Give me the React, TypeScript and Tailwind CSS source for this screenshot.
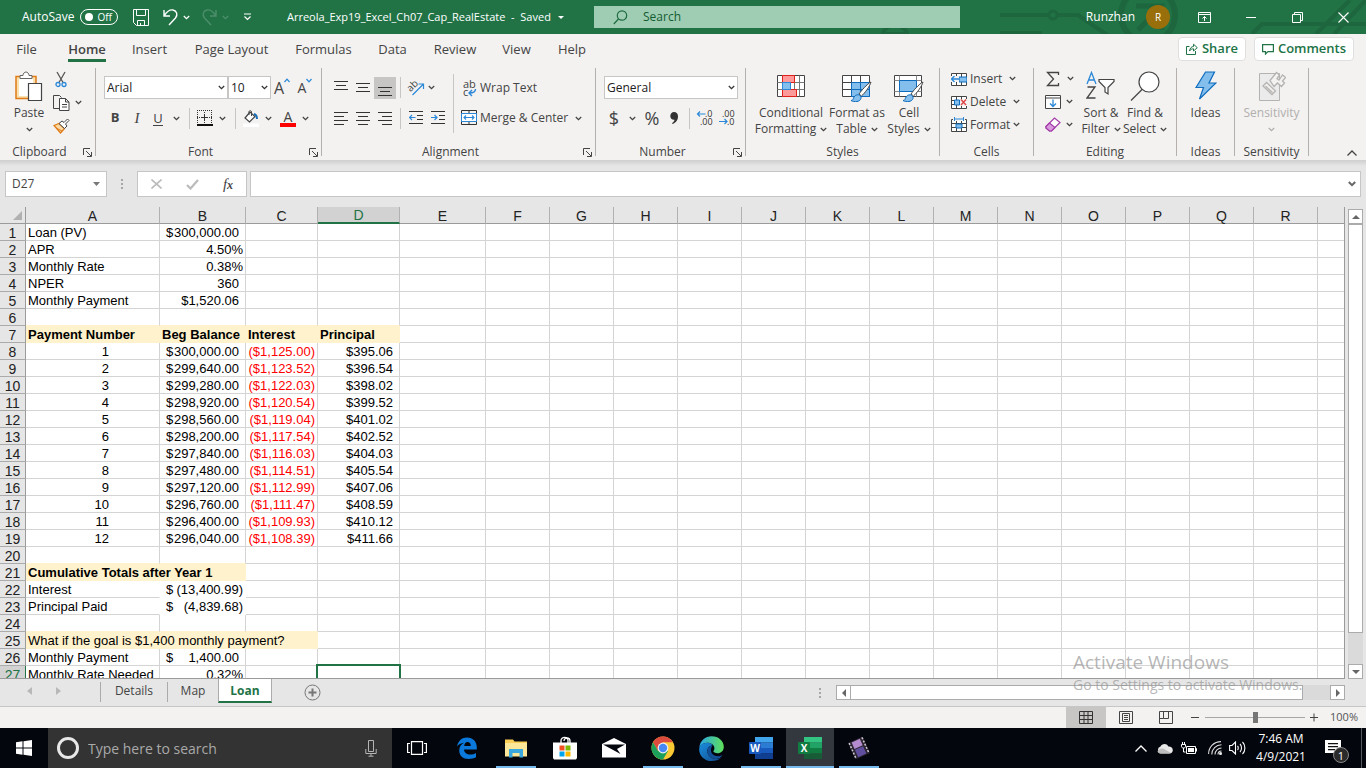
import type { ReactNode } from "react";
import clsx from "clsx";

/* ---------- shared bits ---------- */

function Caret({ className }: { className?: string }) {
    return (
        <span className={clsx("flex shrink-0 items-center justify-center", className)}>
            <svg width="7" height="5" viewBox="0 0 7 5" fill="none" stroke="currentColor" strokeWidth="1.3">
                <path d="M.8 1l2.7 2.6L6.2 1" />
            </svg>
        </span>
    );
}

function Divider({ className }: { className?: string }) {
    return <span className={clsx("w-px shrink-0 bg-[#c8c6c4]", className)} />;
}

function Group({ label, width, launcher, children }: { label: string; width: string; launcher?: boolean; children: ReactNode }) {
    return (
        <section aria-label={label} className={clsx("flex shrink-0", width)}>
            <div className="flex min-w-0 flex-1 flex-col">
                <div className="flex flex-1 items-start">{children}</div>
                <div className="flex h-4 items-center">
                    <span className="flex-1 text-center leading-4">{label}</span>
                    {launcher && (
                        <button aria-label={`${label} settings`} className="w-4 pl-1">
                            <svg width="9" height="9" viewBox="0 0 9 9" fill="none" stroke="#444">
                                <path d="M.5 7V.5H7M3 3l5 5M8.5 4v4.500H4" />
                            </svg>
                        </button>
                    )}
                </div>
            </div>
            <div className="my-1 w-px bg-[#b3b0ad]" />
        </section>
    );
}

function BigButton({ icon, lines, caret, width, disabled }: { icon: ReactNode; lines: string[]; caret?: boolean; width: string; disabled?: boolean }) {
    return (
        <button disabled={disabled} className={clsx("flex shrink-0 flex-col items-center whitespace-nowrap pt-[7px] leading-4", width, disabled && "text-[#b1afad]")}>
            <span className="flex h-[34px] items-start justify-center">{icon}</span>
            {lines.map((line, i) => (
                <span key={line} className="flex h-4 items-center gap-1">
                    {line}
                    {caret && i === lines.length - 1 && lines.length > 1 && <Caret />}
                </span>
            ))}
            {caret && lines.length === 1 && <Caret className="h-4" />}
        </button>
    );
}

function IconButton({ label, width, active, children }: { label: string; width?: string; active?: boolean; children: ReactNode }) {
    return (
        <button aria-label={label} className={clsx("flex h-[22px] shrink-0 items-center justify-center", width ?? "w-[22px]", active && "bg-[#c8c6c4]")}>
            {children}
        </button>
    );
}

function Select({ label, value, width }: { label: string; value: string; width: string }) {
    return (
        <div className={clsx("relative flex h-[23px] shrink-0 items-center border border-[#c8c6c4] bg-white", width)}>
            <select aria-label={label} className="h-full w-full appearance-none bg-transparent pl-[2px] text-[12px] text-[#222] outline-none">
                <option>{value}</option>
            </select>
            <Caret className="pointer-events-none absolute right-[2px] text-[#333]" />
        </div>
    );
}

/* ---------- title bar ---------- */

function TitleBar() {
    return (
        <header className="relative flex h-[34px] shrink-0 items-center overflow-hidden bg-[#217346] text-[12px] text-white">
            <svg className="absolute right-0 top-0" width="500" height="34" viewBox="0 0 500 34" fill="none" stroke="#1d663e" strokeWidth="4">
                <circle cx="29" cy="38" r="13" />
                <path d="M18 34h24" />
                <path d="M134 15h48M190 15h22l32 22M134 33h42" />
                <circle cx="187" cy="15" r="4" strokeWidth="3" />
                <circle cx="282" cy="15" r="27" strokeWidth="6" />
                <path d="M270 6h26v24M296 6l-24 24" strokeWidth="5" />
                <path d="M386 34l10-10h104M450 34l34-34M468 34l32-34" />
            </svg>
            <div className="relative flex w-[594px] shrink-0 items-center">
                <label className="flex w-[131px] items-center pl-[22px]">
                    <span className="w-[58px]">AutoSave</span>
                    <input type="checkbox" role="switch" className="peer sr-only" />
                    <span className="flex h-4 w-[38px] items-center justify-between rounded-full border border-white pl-1 pr-[5px] text-[10px] leading-none">
                        <span className="h-2 w-2 rounded-full bg-white" />
                        Off
                    </span>
                </label>
                <button aria-label="Save" className="w-8 pl-[2px]">
                    <svg width="16" height="17" viewBox="0 0 16 17" fill="none" stroke="#fff">
                        <path d="M.5.5h15v16h-12l-3-3zM3.500.5v6h9v-6M4.500 16.500v-5h7v5M7.500 14v2" />
                    </svg>
                </button>
                <button aria-label="Undo" className="w-[17px]">
                    <svg width="16" height="18" viewBox="0 0 16 18" fill="none" stroke="#fff" strokeWidth="1.400">
                        <path d="M1 2v6h6M1.300 7.500C4 3.500 7 1.500 10 2c4 .8 5 5 2.500 8L6 17" />
                    </svg>
                </button>
                <Caret className="w-[13px]" />
                <button aria-label="Redo" className="ml-[8px] w-[17px] text-[#4d8f6b]">
                    <svg width="16" height="18" viewBox="0 0 16 18" fill="none" stroke="currentColor" strokeWidth="1.400">
                        <path d="M15 2v6H9M14.700 7.500C12 3.500 9 1.500 6 2 2 2.800 1 7 3.500 10l6.500 7" />
                    </svg>
                </button>
                <Caret className="w-[14px] text-[#4d8f6b]" />
                <button aria-label="Customize Quick Access Toolbar" className="ml-[11px] w-[44px]">
                    <svg width="9" height="8" viewBox="0 0 9 8" fill="none" stroke="#fff" strokeWidth="1.200">
                        <path d="M1 1h7M1.500 3.500l3 3 3-3" />
                    </svg>
                </button>
                <button className="flex items-center gap-[7px] whitespace-nowrap text-[11px]">
                    Arreola_Exp19_Excel_Ch07_Cap_RealEstate &nbsp;-&nbsp; Saved
                    <svg width="6" height="3" viewBox="0 0 6 3" fill="#fff"><path d="M0 0h6L3 3z" /></svg>
                </button>
            </div>
            <label className="relative flex h-[22px] w-[366px] shrink-0 items-center gap-[15px] bg-[#9fcdb3] pl-[19px]">
                <svg width="15" height="15" viewBox="0 0 15 15" fill="none" stroke="#1d6b40" strokeWidth="1.200" className="shrink-0">
                    <circle cx="9" cy="5.500" r="4.700" />
                    <path d="M5.500 9L.8 14" />
                </svg>
                <input aria-label="Search" placeholder="Search" className="w-full bg-transparent outline-none placeholder:text-[#135c32]" />
            </label>
            <div className="relative flex flex-1 items-center justify-end">
                <span>Runzhan</span>
                <span className="ml-[11px] mr-[10px] flex h-6 w-6 items-center justify-center rounded-full bg-[#986f0b] text-[10px]">R</span>
                <button aria-label="Ribbon display options" className="flex w-12 justify-center">
                    <svg width="13" height="11" viewBox="0 0 13 11" fill="none" stroke="#fff">
                        <path d="M.5.5h12v10H.5zM.5 2.500h12M6.500 9V4.500M4.500 6.500l2-2 2 2" />
                    </svg>
                </button>
                <button aria-label="Minimize" className="flex w-[46px] justify-center"><span className="h-px w-[10px] bg-white" /></button>
                <button aria-label="Restore" className="flex w-[46px] justify-center">
                    <svg width="11" height="11" viewBox="0 0 11 11" fill="none" stroke="#fff">
                        <path d="M.5 2.500h8v8h-8zM2.500 2.500v-2h8v8h-2" />
                    </svg>
                </button>
                <button aria-label="Close" className="flex w-[46px] justify-center">
                    <svg width="11" height="11" viewBox="0 0 11 11" stroke="#fff" strokeWidth="1.100">
                        <path d="M.5.5l10 10M10.500.5l-10 10" />
                    </svg>
                </button>
            </div>
        </header>
    );
}

/* ---------- ribbon tabs ---------- */

const TABS = [
    { name: "File", width: "w-[53px]" },
    { name: "Home", width: "w-[68px]" },
    { name: "Insert", width: "w-[57px]" },
    { name: "Page Layout", width: "w-[107px]" },
    { name: "Formulas", width: "w-[77px]" },
    { name: "Data", width: "w-[61px]" },
    { name: "Review", width: "w-[64px]" },
    { name: "View", width: "w-[59px]" },
    { name: "Help", width: "w-[52px]" },
];

function RibbonTabs() {
    return (
        <nav className="flex h-[30px] shrink-0 items-center bg-[#f3f2f1] text-[13px] text-[#444]">
            {TABS.map((tab) => (
                <button key={tab.name} className={clsx("flex h-full justify-center whitespace-nowrap", tab.width)}>
                    <span className={clsx("mb-[2px] mt-[5px] border-b-[3px] leading-5", tab.name === "Home" ? "border-[#217346] font-semibold" : "border-transparent")}>
                        {tab.name}
                    </span>
                </button>
            ))}
            <div className="flex flex-1 justify-end gap-2 pr-3 font-semibold text-[#217346]">
                <button className="flex h-6 w-[68px] items-center justify-center gap-1 rounded-sm border border-[#e1dfdd] bg-white">
                    <svg width="12" height="12" viewBox="0 0 12 12" fill="none" stroke="#217346">
                        <path d="M3.500 3.500h-3v8h9V8M3.500 8c.5-3 2-4.500 4-4.500V1.200L11.300 4.700 7.500 8V5.800C5.500 5.800 4.500 6.500 3.500 8z" />
                    </svg>
                    Share
                </button>
                <button className="flex h-6 w-[100px] items-center justify-center gap-1 rounded-sm border border-[#e1dfdd] bg-white">
                    <svg width="12" height="11" viewBox="0 0 12 11" fill="none" stroke="#217346" strokeWidth="1.200">
                        <path d="M.6.6h10.800v7H6L3.500 10V7.600H.6z" />
                    </svg>
                    Comments
                </button>
            </div>
        </nav>
    );
}

/* ---------- ribbon icons ---------- */

function Lines({ rows }: { rows: number[][] }) {
    return (
        <svg width="14" height="16" viewBox="0 0 14 16" fill="#333">
            {rows.map(([x, y, w]) => <rect key={y} x={x} y={y} width={w} height="1" />)}
        </svg>
    );
}

function PasteIcon() {
    return (
        <svg width="28" height="31" viewBox="0 0 28 31" fill="none">
            <path d="M1 5.500h20v22H1z" fill="#fbe0b0" stroke="#e07b16" strokeWidth="1.500" />
            <path d="M4 8h14v17H4z" fill="#fff" />
            <path d="M5 7.500V4.500h3C8 2.500 9.500 1 11 1s3 1.500 3 3.500h3v3z" fill="#fff" stroke="#666" />
            <path d="M13.500 12.500h13v17h-13z" fill="#fff" stroke="#444" strokeWidth="1.200" />
        </svg>
    );
}

function ScissorsIcon() {
    return (
        <svg width="12" height="17" viewBox="0 0 12 17" fill="none">
            <path d="M2 1l6 10.500M10 1L4 11.500" stroke="#555" strokeWidth="1.300" />
            <circle cx="3" cy="13.500" r="2" stroke="#2b88d8" strokeWidth="1.300" />
            <circle cx="9" cy="13.500" r="2" stroke="#2b88d8" strokeWidth="1.300" />
        </svg>
    );
}

function CopyIcon() {
    return (
        <svg width="17" height="17" viewBox="0 0 17 17" fill="none" stroke="#444">
            <path d="M6.500 14.500h-6v-13h6l2 2" />
            <path d="M6.500 4.500h6l3.500 3.500v8.500H6.500zM12.500 4.500V8H16M9 10.500h5M9 13h5" fill="#fff" />
        </svg>
    );
}

function PainterIcon() {
    return (
        <svg width="17" height="16" viewBox="0 0 17 16" fill="none">
            <path d="M1 7.500l5-2 5.500 5L7.500 15z" fill="#fbd9a5" stroke="#e07b16" strokeWidth="1.300" />
            <path d="M3 10l6 3" stroke="#e07b16" />
            <path d="M6 5.500L9 3l2 1.500L14.500 1 16 2.500 12.500 6l1.500 2-2.500 2.500z" fill="#fff" stroke="#444" />
        </svg>
    );
}

function BordersIcon() {
    return (
        <svg width="16" height="16" viewBox="0 0 16 16" fill="none" stroke="#333">
            <path d="M0 .5h16M0 7.500h16" strokeDasharray="1 1" />
            <path d="M.5 2v12M7.500 2v12M14.500 2v12" strokeDasharray="1 1" />
            <path d="M5 7.500h5M7.500 5v5" />
            <path d="M0 15h16" strokeWidth="2" stroke="#111" />
        </svg>
    );
}

function FillIcon() {
    return (
        <svg width="16" height="17" viewBox="0 0 16 17" fill="none">
            <path d="M7 2L2 8l4.500 4L12 6.500z" fill="#fff" stroke="#444" strokeWidth="1.200" />
            <path d="M6 5V1.500C6 .5 8.500.5 8.500 1.500V6" stroke="#444" />
            <path d="M11 4c2 .5 3 2 3 5" stroke="#1d6fb8" strokeWidth="2" />
            <path d="M0 13.500h16V17H0z" fill="#fff" />
        </svg>
    );
}

function OrientIcon() {
    return (
        <svg width="18" height="17" viewBox="0 0 18 17" className="overflow-visible">
            <text x="1" y="11" fontSize="10" fill="#444" transform="rotate(-45 5 9)">ab</text>
            <path d="M5.500 16L16 5.500M11.500 5H16.500V10" fill="none" stroke="#2b88d8" strokeWidth="1.200" />
        </svg>
    );
}

function WrapIcon() {
    return (
        <svg width="16" height="18" viewBox="0 0 16 18" className="overflow-visible">
            <text fontSize="11" fill="#444">
                <tspan x="2" y="9">ab</tspan>
                <tspan x="2" y="17">c</tspan>
            </text>
            <path d="M14.500 10c0 3-2 4-6 4M11 11l-3 3 3 3" fill="none" stroke="#2b88d8" strokeWidth="1.400" />
        </svg>
    );
}

function IndentIcon({ flip }: { flip?: boolean }) {
    return (
        <svg width="14" height="14" viewBox="0 0 14 14" fill="none">
            <path d="M0 .5h14M8 4.500h6M8 8.500h6M0 12.500h14" stroke="#333" />
            <path d={flip ? "M0 6.500h6M3.500 4l2.500 2.500L3.500 9" : "M.5 6.500h6M3 4L.5 6.500 3 9"} stroke="#2b88d8" strokeWidth="1.200" />
        </svg>
    );
}

function MergeIcon() {
    return (
        <svg width="16" height="16" viewBox="0 0 16 16" fill="none">
            <path d="M.5.5h15v14H.5zM8 .5v3M8 12v3" stroke="#333" />
            <path d="M.5 3.500h15v8H.5z" fill="#fff" stroke="#2b88d8" />
            <path d="M3 7.500h10M5 5.500l-2 2 2 2M11 5.500l2 2-2 2" stroke="#2b88d8" strokeWidth="1.100" />
        </svg>
    );
}

function DecimalIcon({ decrease }: { decrease?: boolean }) {
    return (
        <svg width="17" height="18" viewBox="0 0 17 18" className="overflow-visible">
            <text fontSize="9" fill="#333">
                <tspan x={decrease ? 3 : 8} y="8">{decrease ? ".00" : ".0"}</tspan>
                <tspan x={decrease ? 8 : 3} y="16">{decrease ? ".0" : ".00"}</tspan>
            </text>
            <path d={decrease ? "M0 12.500h8M5.500 10L8 12.500 5.500 15" : "M.5 5h8M3 2.500L.5 5 3 7.500"} fill="none" stroke="#2b88d8" strokeWidth="1.200" />
        </svg>
    );
}

function ConditionalIcon() {
    return (
        <svg width="28" height="24" viewBox="0 0 28 24" fill="none">
            <path d="M.5 1.500h27v21H.5z" fill="#fff" stroke="#444" />
            <path d="M5.500 1.500v21M22.500 1.500v21M.5 8.500h27M.5 15.500h27M17.500 8.500v7" stroke="#777" />
            <path d="M5.500 1.500h12v7h-12zM5.500 15.500h14v7h-14z" fill="#ff9a9a" stroke="#e0201b" />
            <path d="M5.500 8.500h8v7h-8z" fill="#83beec" stroke="#2b88d8" />
        </svg>
    );
}

function StyleIcon({ table }: { table?: boolean }) {
    return (
        <svg width="30" height="28" viewBox="0 0 30 28" fill="none">
            <path d="M.5 1.500h27v21H.5z" fill="#fff" stroke="#444" />
            {table ? (
                <>
                    <path d="M9.500 8.500h18v14h-18z" fill="#83beec" />
                    <path d="M.5 8.500h27M.5 15.500h9M9.500 1.500v21M18.500 1.500v7" stroke="#444" />
                    <path d="M9.500 15.500h18M18.500 8.500v14M9.500 8.500h18v14h-18z" stroke="#0f6cbd" />
                </>
            ) : (
                <>
                    <path d="M.5 6.500h27M.5 17.500h27M5.500 1.500v21M22.500 1.500v21" stroke="#888" />
                    <path d="M5.500 6.500h17v11h-17z" fill="#83beec" stroke="#0f6cbd" />
                </>
            )}
            <path d="M29 8c-4 2-10 9-12 12l2.500 2C23 19 28 12 29 8z" fill="#fff" stroke="#444" />
            <path d="M9 26.500c2 0 2-1.500 3-3.500 1.500-2.500 5-3 6.500-1s0 5-3.500 5.500c-2 .3-4.500 0-6-1z" fill="#83beec" stroke="#0f6cbd" />
        </svg>
    );
}

function CellsIcon({ kind }: { kind: string }) {
    return (
        <svg width="16" height="16" viewBox="0 0 16 16" fill="none">
            <path d="M.5 2.500h15v12H.5zM.5 6.500h15M.5 10.500h15M5.500 2.500v12M10.500 2.500v12" fill="#fff" stroke="#444" />
            {kind === "Insert" && (
                <>
                    <path d="M8 6h8v5H8z" fill="#83beec" stroke="#0f6cbd" />
                    <path d="M0 5h8v6H0z" fill="#f3f2f1" />
                    <path d="M.5 8h8M3.500 5l-3 3 3 3" stroke="#2b88d8" strokeWidth="1.300" />
                </>
            )}
            {kind === "Delete" && (
                <>
                    <path d="M3.500 6h5v5h-5z" fill="#83beec" stroke="#0f6cbd" />
                    <path d="M9 5h7v7H9z" fill="#f3f2f1" />
                    <path d="M10 5.500l5 5.500M15 5.500L10 11" stroke="#e04343" strokeWidth="1.400" />
                </>
            )}
            {kind === "Format" && (
                <>
                    <path d="M2 0h12v4H2z" fill="#f3f2f1" />
                    <path d="M5 7h6v4H5z" fill="#83beec" stroke="#0f6cbd" />
                    <path d="M3.500 0v4M12.500 0v4M3.500 2h9" stroke="#2b88d8" />
                </>
            )}
        </svg>
    );
}

function SigmaIcon() {
    return (
        <svg width="16" height="16" viewBox="0 0 16 16" fill="none" stroke="#444" strokeWidth="1.300">
            <path d="M13.500 4V1.500H2.500L8.500 8l-6 6.500h11V12" />
        </svg>
    );
}

function FillDownIcon() {
    return (
        <svg width="16" height="14" viewBox="0 0 16 14" fill="none">
            <path d="M.5.500h15v13H.5zM.5 3h15" fill="#fff" stroke="#444" />
            <path d="M8 4.500v7M5 8.500l3 3 3-3" stroke="#2b88d8" strokeWidth="1.300" />
        </svg>
    );
}

function EraserIcon() {
    return (
        <svg width="16" height="15" viewBox="0 0 16 15" stroke="#a33aa8" strokeWidth="1.200">
            <path d="M1 9.500L9.500 1 15 5.500 6.500 14H4.500L1 11z" fill="#fff" />
            <path d="M1 9.500l3.500-3.500L10 10.500 6.500 14H4.500L1 11z" fill="#d99ade" />
        </svg>
    );
}

function SortIcon() {
    return (
        <svg width="30" height="30" viewBox="0 0 30 30" fill="none">
            <path d="M1 13L5.500 1.500 10 13M2.500 9h6" stroke="#2b88d8" strokeWidth="1.300" />
            <path d="M1.500 16h7.500l-8 11h8.500" stroke="#444" strokeWidth="1.300" />
            <path d="M13 8.500h15v2l-6 6V23l-3-2v-4.500l-6-6z" fill="#fff" stroke="#444" strokeWidth="1.200" />
        </svg>
    );
}

function FindIcon() {
    return (
        <svg width="30" height="31" viewBox="0 0 30 31" stroke="#444" strokeWidth="1.200">
            <circle cx="19" cy="11" r="10" fill="#fff" />
            <path d="M12 18.500L1 29.500" />
        </svg>
    );
}

function IdeasIcon() {
    return (
        <svg width="22" height="29" viewBox="0 0 22 29">
            <path d="M10.500 1h9L14 12h7L4.500 28l4-11.500H1z" fill="#83beec" stroke="#0f6cbd" strokeWidth="1.200" />
        </svg>
    );
}

function SensitivityIcon() {
    return (
        <svg width="28" height="31" viewBox="0 0 28 31" fill="#f3f2f1" stroke="#b5b3b1">
            <path d="M1.500 2.500h20v27h-20z" fill="#ebebeb" />
            <path d="M5 15l3.500-3.500 9 8.500-3.500 3.500zM7.500 15l7 6.500" strokeWidth="1.300" />
            <path d="M12 9.500L18.500 1.500l3 2.500L19 7.500l2 1.500 3.500-5 3 2.500-3 3.500 2 2-3 3.500-4-3.500-3.500 3.500z" strokeWidth="1.300" />
        </svg>
    );
}

/* ---------- ribbon ---------- */

function Ribbon() {
    return (
        <div className="flex h-24 shrink-0 bg-[#f3f2f1] text-[12px] text-[#444]">
            <Group label="Clipboard" width="w-[96px]" launcher>
                <BigButton icon={<PasteIcon />} lines={["Paste"]} caret width="w-[50px] pl-2" />
                <div className="pl-[3px] pt-1">
                    <button aria-label="Cut" className="flex h-[23px] w-4 items-center justify-center"><ScissorsIcon /></button>
                    <button aria-label="Copy" className="flex h-[23px] items-center"><CopyIcon /><Caret className="w-4" /></button>
                    <button aria-label="Format Painter" className="flex h-[23px] items-center"><PainterIcon /></button>
                </div>
            </Group>

            <Group label="Font" width="w-[226px]" launcher>
                <div className="pl-2 pt-3">
                    <div className="flex items-center">
                        <Select label="Font" value="Arial" width="w-[124px]" />
                        <Select label="Font size" value="10" width="w-[43px]" />
                        <button aria-label="Increase font size" className="flex w-[22px] items-start justify-center text-[16px] leading-5">
                            A<svg width="6" height="5" viewBox="0 0 6 5" fill="none" stroke="#2b88d8" strokeWidth="1.200"><path d="M.5 4L3 1.200 5.500 4" /></svg>
                        </button>
                        <button aria-label="Decrease font size" className="flex w-6 items-start justify-center text-[14px] leading-5">
                            A<svg width="6" height="5" viewBox="0 0 6 5" fill="none" stroke="#2b88d8" strokeWidth="1.200"><path d="M.5 1L3 3.800 5.500 1" /></svg>
                        </button>
                    </div>
                    <div className="flex h-[38px] items-center">
                        <IconButton label="Bold"><b className="text-[13px]">B</b></IconButton>
                        <IconButton label="Italic"><i className="font-['Liberation_Serif',serif] text-[15px]">I</i></IconButton>
                        <IconButton label="Underline" width="w-5"><span className="border-b border-[#444] text-[13px] leading-[14px]">U</span></IconButton>
                        <Caret className="w-4" />
                        <Divider className="ml-[5px] mr-[7px] h-[21px]" />
                        <IconButton label="Borders" width="w-4"><BordersIcon /></IconButton>
                        <Caret className="w-[18px]" />
                        <Divider className="ml-1 mr-[7px] h-[21px]" />
                        <IconButton label="Fill color" width="w-4"><FillIcon /></IconButton>
                        <Caret className="w-[18px]" />
                        <IconButton label="Font color" width="w-[22px]">
                            <span className="w-4 border-b-4 border-[#f00] text-center text-[14px] leading-[13px]">A</span>
                        </IconButton>
                        <Caret className="w-[12px]" />
                    </div>
                </div>
            </Group>

            <Group label="Alignment" width="w-[274px]" launcher>
                <div className="w-[131px] pl-2 pt-3">
                    <div className="flex h-[23px] items-center">
                        <IconButton label="Top align"><Lines rows={[[0, 1, 14], [2, 5, 10], [0, 9, 14]]} /></IconButton>
                        <IconButton label="Middle align"><Lines rows={[[0, 3, 14], [2, 7, 10], [0, 11, 14]]} /></IconButton>
                        <IconButton label="Bottom align" active><Lines rows={[[0, 7, 14], [2, 11, 10], [0, 15, 14]]} /></IconButton>
                        <Divider className="mx-1 h-[21px]" />
                        <IconButton label="Orientation"><OrientIcon /></IconButton>
                        <Caret className="w-2" />
                    </div>
                    <div className="flex h-[38px] items-center">
                        <IconButton label="Align left"><Lines rows={[[0, 2, 14], [0, 6, 10], [0, 10, 14], [0, 14, 10]]} /></IconButton>
                        <IconButton label="Center"><Lines rows={[[0, 2, 14], [2, 6, 10], [0, 10, 14], [2, 14, 10]]} /></IconButton>
                        <IconButton label="Align right"><Lines rows={[[0, 2, 14], [4, 6, 10], [0, 10, 14], [4, 14, 10]]} /></IconButton>
                        <Divider className="mx-1 h-[21px]" />
                        <IconButton label="Decrease indent"><IndentIcon /></IconButton>
                        <IconButton label="Increase indent"><IndentIcon flip /></IconButton>
                    </div>
                </div>
                <Divider className="mt-[10px] h-[59px]" />
                <div className="pl-[7px] pt-3">
                    <button className="flex h-[23px] items-center gap-[3px]"><WrapIcon />Wrap Text</button>
                    <button className="flex h-[38px] items-center gap-[3px] whitespace-nowrap"><MergeIcon />Merge &amp; Center<Caret className="w-[14px]" /></button>
                </div>
            </Group>

            <Group label="Number" width="w-[150px]" launcher>
                <div className="pl-2 pt-3">
                    <Select label="Number format" value="General" width="w-[134px]" />
                    <div className="flex h-[38px] items-center">
                        <IconButton label="Accounting format" width="w-5"><span className="text-[18px]">$</span></IconButton>
                        <Caret className="w-4" />
                        <IconButton label="Percent style" width="w-6"><span className="text-[18px]">%</span></IconButton>
                        <IconButton label="Comma style" width="w-5">
                            <svg width="8" height="12" viewBox="0 0 8 12" fill="#333"><path d="M4 0c2.500 0 4 1.700 4 4.300C8 8 6 11 2.500 12L2 11c1.500-.8 2.300-1.900 2.500-3.300C2 8 .3 6.300.3 4.200.3 1.800 1.800 0 4 0z" /></svg>
                        </IconButton>
                        <Divider className="ml-[5px] mr-[7px] h-[21px]" />
                        <IconButton label="Increase decimal" width="w-4"><DecimalIcon /></IconButton>
                        <IconButton label="Decrease decimal" width="w-7"><DecimalIcon decrease /></IconButton>
                    </div>
                </div>
            </Group>

            <Group label="Styles" width="w-[194px]">
                <div className="flex pl-[6px]">
                    <BigButton icon={<ConditionalIcon />} lines={["Conditional", "Formatting"]} caret width="w-[78px] [&>span:first-child]:pt-[3px]" />
                    <BigButton icon={<StyleIcon table />} lines={["Format as", "Table"]} caret width="w-[54px] [&>span:first-child]:pt-[3px]" />
                    <BigButton icon={<StyleIcon />} lines={["Cell", "Styles"]} caret width="w-[50px] [&>span:first-child]:pt-[3px]" />
                </div>
            </Group>

            <Group label="Cells" width="w-[94px]">
                <div className="pl-[11px] pt-[3px]">
                    {["Insert", "Delete", "Format"].map((name) => (
                        <button key={name} className="flex h-[23px] items-center gap-[3px]">
                            <CellsIcon kind={name} />
                            {name}
                            <Caret className={name === "Format" ? "w-[7px]" : "w-[14px]"} />
                        </button>
                    ))}
                </div>
            </Group>

            <Group label="Editing" width="w-[143px]">
                <div className="pl-[11px] pt-[3px]">
                    <button aria-label="AutoSum" className="flex h-[23px] items-center"><SigmaIcon /><Caret className="w-[18px]" /></button>
                    <button aria-label="Fill" className="flex h-[23px] items-center"><FillDownIcon /><Caret className="w-[16px]" /></button>
                    <button aria-label="Clear" className="flex h-[23px] items-center"><EraserIcon /><Caret className="w-[16px]" /></button>
                </div>
                <BigButton icon={<SortIcon />} lines={["Sort &", "Filter"]} caret width="w-[44px]" />
                <BigButton icon={<FindIcon />} lines={["Find &", "Select"]} caret width="w-[44px]" />
            </Group>

            <Group label="Ideas" width="w-[58px]">
                <BigButton icon={<IdeasIcon />} lines={["Ideas"]} width="w-full" />
            </Group>

            <Group label="Sensitivity" width="w-[74px]">
                <BigButton icon={<SensitivityIcon />} lines={["Sensitivity"]} caret width="w-full" disabled />
            </Group>

            <div className="flex flex-1 items-end justify-end pb-1 pr-[9px]">
                <button aria-label="Collapse ribbon">
                    <svg width="10" height="6" viewBox="0 0 10 6" fill="none" stroke="#444" strokeWidth="1.300"><path d="M.5 5.500L5 1l4.500 4.500" /></svg>
                </button>
            </div>
        </div>
    );
}

function Dots() {
    return (
        <svg width="2" height="10" viewBox="0 0 2 10" fill="#a6a6a6">
            <path d="M0 0h2v2H0zM0 4h2v2H0zM0 8h2v2H0z" />
        </svg>
    );
}

function FormulaBar() {
    return (
        <div className="flex h-[47px] shrink-0 items-start bg-[linear-gradient(#cfcfcf,#e6e6e6_6px)] pl-[5px] pr-[5px] pt-[11px]">
            <div className="flex h-[26px] w-[102px] shrink-0 items-center border border-[#c6c6c6] bg-white pr-[6px]">
                <input aria-label="Name box" defaultValue="D27" className="w-full min-w-0 pl-[6px] text-[12px] text-[#444] outline-none" />
                <svg width="7" height="4" viewBox="0 0 7 4" fill="#777" className="shrink-0"><path d="M0 0h7L3.500 4z" /></svg>
            </div>
            <span className="flex h-[26px] w-[30px] shrink-0 items-center justify-center"><Dots /></span>
            <div className="flex h-[26px] w-[110px] shrink-0 items-center border border-[#c6c6c6] bg-white">
                <button aria-label="Cancel" className="flex w-9 justify-center">
                    <svg width="11" height="10" viewBox="0 0 11 10" stroke="#bbb" strokeWidth="1.600"><path d="M.5.5l10 9M10.500.5l-10 9" /></svg>
                </button>
                <button aria-label="Enter" className="flex w-9 justify-center">
                    <svg width="13" height="11" viewBox="0 0 13 11" fill="none" stroke="#bbb" strokeWidth="2.200"><path d="M1 6l3.500 3.500L12 1" /></svg>
                </button>
                <button aria-label="Insert function" className="w-9 font-['Liberation_Serif',serif] text-[15px] italic leading-5 text-[#444]">
                    f<span className="text-[12px] font-bold">x</span>
                </button>
            </div>
            <div className="ml-[3px] flex h-[26px] min-w-0 flex-1 items-center border border-[#c6c6c6] bg-white pr-[4px]">
                <input aria-label="Formula bar" className="w-full min-w-0 px-1 text-[12px] outline-none" />
                <svg width="8" height="6" viewBox="0 0 8 6" fill="none" stroke="#666" strokeWidth="2" className="shrink-0"><path d="M.8 1L4 4.200 7.200 1" /></svg>
            </div>
        </div>
    );
}

/* ---------- worksheet ---------- */

type Cell = { text?: string; symbol?: string; className?: string; span?: number };

const COLUMNS = ["A", "B", "C", "D", "E", "F", "G", "H", "I", "J", "K", "L", "M", "N", "O", "P", "Q", "R", ""];
const COLUMN_WIDTHS = ["w-[134px]", "w-[86px]", "w-[72px]", "w-[82px]", "w-[86px]"];

const FILLED = "border-[#fff2cc] bg-[#fff2cc] pl-[2px]";
const LABEL = "border-[#d4d4d4] pl-[2px]";
const NUMBER = "border-[#d4d4d4] pr-[6px] text-right";
const PERCENT = "border-[#d4d4d4] pr-[2px] text-right";
const ABOVE_FILL = "border-r-[#d4d4d4] border-b-[#fff2cc]";

const label = (text: string): Cell => ({ text, className: LABEL });
const money = (text: string): Cell => ({ symbol: "$", text, className: "border-[#d4d4d4] pl-[6px] pr-[6px]" });

const PAYMENTS = [
    ["300,000.00", "1,125.00", "395.06"],
    ["299,640.00", "1,123.52", "396.54"],
    ["299,280.00", "1,122.03", "398.02"],
    ["298,920.00", "1,120.54", "399.52"],
    ["298,560.00", "1,119.04", "401.02"],
    ["298,200.00", "1,117.54", "402.52"],
    ["297,840.00", "1,116.03", "404.03"],
    ["297,480.00", "1,114.51", "405.54"],
    ["297,120.00", "1,112.99", "407.06"],
    ["296,760.00", "1,111.47", "408.59"],
    ["296,400.00", "1,109.93", "410.12"],
    ["296,040.00", "1,108.39", "411.66"],
];

const ROWS: Cell[][] = [
    [label("Loan (PV)"), money("300,000.00")],
    [label("APR"), { text: "4.50%", className: PERCENT }],
    [label("Monthly Rate"), { text: "0.38%", className: PERCENT }],
    [label("NPER"), { text: "360", className: NUMBER }],
    [label("Monthly Payment"), { text: "$1,520.06", className: NUMBER }],
    [{ className: ABOVE_FILL }, { className: ABOVE_FILL }, { className: ABOVE_FILL }, { className: ABOVE_FILL }],
    ["Payment Number", "Beg Balance", "Interest", "Principal"].map((text) => ({ text, className: `${FILLED} font-bold` })),
    ...PAYMENTS.map(([balance, interest, principal], i): Cell[] => [
        { text: String(i + 1), className: "border-[#d4d4d4] pr-[50px] text-right" },
        money(balance),
        { text: `($${interest})`, className: `${PERCENT} text-[#f00]` },
        { text: `$${principal}`, className: NUMBER },
    ]),
    [{ className: ABOVE_FILL }, { className: ABOVE_FILL }],
    [{ text: "Cumulative Totals after Year 1", className: `${FILLED} font-bold`, span: 2 }],
    [
        { text: "Interest", className: "border-r-white border-b-[#d4d4d4] pl-[2px]" },
        { symbol: "$", text: "(13,400.99)", className: "border-white pl-[6px] pr-[2px]" },
    ],
    [
        { text: "Principal Paid", className: "border-r-white border-b-[#d4d4d4] pl-[2px]" },
        { symbol: "$", text: "(4,839.68)", className: "border-white pl-[6px] pr-[2px]" },
    ],
    [{ className: ABOVE_FILL }, { className: ABOVE_FILL }, { className: ABOVE_FILL }],
    [{ text: "What if the goal is $1,400 monthly payment?", className: FILLED, span: 3 }],
    [label("Monthly Payment"), money("1,400.00")],
    [label("Monthly Rate Needed"), { text: "0.32%", className: PERCENT }],
];

function DataRow({ cells, number }: { cells: Cell[]; number: number }) {
    const used = cells.reduce((sum, cell) => sum + (cell.span ?? 1), 0);
    const selected = number === 27;

    return (
        <tr className="h-[17px]">
            <th
                scope="row"
                className={clsx(
                    "border-b border-r border-b-[#ababab] px-0 pb-0 pt-[2px] text-center text-[14px] font-normal",
                    selected ? "border-r-[#217346] bg-[#d2d2d2] text-[#217346]" : "border-r-[#9b9b9b] bg-[#e6e6e6] text-[#222]"
                )}
            >
                {number}
            </th>
            {cells.map((cell, i) => (
                <td key={i} colSpan={cell.span} className={clsx("border-b border-r pb-0 pt-[2px]", cell.className)}>
                    {cell.symbol ? (
                        <span className="flex justify-between"><span>{cell.symbol}</span><span>{cell.text}</span></span>
                    ) : (
                        cell.text
                    )}
                </td>
            ))}
            {COLUMNS.slice(used).map((name, i) => (
                <td key={i} className={clsx("relative border-b border-[#d4d4d4] p-0", name && "border-r")}>
                    {selected && name === "D" && <span className="absolute -left-[2px] -right-[2px] -top-[2px] h-5 border-2 border-[#217346]" />}
                </td>
            ))}
        </tr>
    );
}

function Worksheet() {
    return (
        <div className="flex min-h-0 flex-1 bg-[#e6e6e6]">
            <div className="min-w-0 flex-1 overflow-hidden border-b border-r border-[#9b9b9b] bg-white">
                <table className="w-full table-fixed border-separate border-spacing-0 whitespace-nowrap font-['Liberation_Sans',Arial,sans-serif] text-[13px] leading-[14px] text-black">
                    <colgroup>
                        <col className="w-[26px]" />
                        {COLUMNS.map((name, i) => <col key={i} className={name ? COLUMN_WIDTHS[i] ?? "w-[64px]" : undefined} />)}
                    </colgroup>
                    <thead>
                        <tr className="h-[17px]">
                            <th className="border-b border-r border-[#9b9b9b] bg-[#e6e6e6] p-0">
                                <svg width="9" height="9" viewBox="0 0 9 9" fill="#b1b1b1" className="ml-auto mr-[3px]"><path d="M9 0v9H0z" /></svg>
                            </th>
                            {COLUMNS.map((name, i) => (
                                <th
                                    key={i}
                                    scope="col"
                                    className={clsx(
                                        "border-r-[#b1b1b1] px-0 pb-0 pt-[2px] text-center text-[14px] font-normal",
                                        name && "border-r",
                                        name === "D" ? "border-b-2 border-b-[#217346] bg-[#d2d2d2] leading-[13px] text-[#217346]" : "border-b border-b-[#9b9b9b] bg-[#e6e6e6] text-[#222]"
                                    )}
                                >
                                    {name}
                                </th>
                            ))}
                        </tr>
                    </thead>
                    <tbody>
                        {ROWS.map((cells, i) => <DataRow key={i} cells={cells} number={i + 1} />)}
                    </tbody>
                </table>
            </div>
            <div className="flex w-[21px] shrink-0 flex-col pl-[3px] pr-[3px] pt-[2px]">
                <button aria-label="Scroll up" className="flex h-[15px] items-center justify-center border border-[#ababab] bg-white">
                    <svg width="8" height="4" viewBox="0 0 8 4" fill="#666"><path d="M0 4h8L4 0z" /></svg>
                </button>
                <div className="flex-1 bg-[#dadada]">
                    <div className="h-[93%] border border-[#ababab] bg-white" />
                </div>
                <button aria-label="Scroll down" className="flex h-[15px] items-center justify-center border border-[#ababab] bg-white">
                    <svg width="8" height="4" viewBox="0 0 8 4" fill="#666"><path d="M0 0h8L4 4z" /></svg>
                </button>
            </div>
        </div>
    );
}

function SheetTabs() {
    return (
        <div className="flex h-7 shrink-0 items-start border-b border-[#c6c6c6] bg-[#e6e6e6] text-[12px] text-[#444]">
            <div className="flex h-6 w-[100px] shrink-0 items-center gap-6 pl-[27px]">
                <button aria-label="Previous sheet"><svg width="5" height="8" viewBox="0 0 5 8" fill="#b8b8b8"><path d="M5 0v8L0 4z" /></svg></button>
                <button aria-label="Next sheet"><svg width="5" height="8" viewBox="0 0 5 8" fill="#b8b8b8"><path d="M0 0v8l5-4z" /></svg></button>
            </div>
            <button className="mt-[3px] flex h-5 w-[67px] justify-center border-l border-[#ababab] leading-[18px]">Details</button>
            <button className="mt-[3px] flex h-5 w-[51px] justify-center border-l border-[#ababab] leading-[18px]">Map</button>
            <button className="flex h-6 w-[54px] items-center justify-center border-x border-b-2 border-x-[#ababab] border-b-[#217346] bg-white pt-px font-bold text-[#217346]">Loan</button>
            <button aria-label="New sheet" className="ml-8 mt-[5px]">
                <svg width="17" height="17" viewBox="0 0 17 17" fill="none" stroke="#777">
                    <circle cx="8.500" cy="8.500" r="7.500" />
                    <path d="M4.500 8.500h8M8.500 4.500v8" strokeWidth="2" />
                </svg>
            </button>
            <div className="flex flex-1 items-center justify-end pt-[6px]">
                <Dots />
                <div className="ml-[15px] mr-[21px] flex h-[15px] w-[509px] bg-[#dadada]">
                    <button aria-label="Scroll left" className="flex w-[15px] items-center justify-center border border-[#ababab] bg-white">
                        <svg width="4" height="8" viewBox="0 0 4 8" fill="#666"><path d="M4 0v8L0 4z" /></svg>
                    </button>
                    <div className="w-[452px] border border-l-0 border-[#ababab] bg-white" />
                    <button aria-label="Scroll right" className="ml-auto flex w-[15px] items-center justify-center border border-[#ababab] bg-white">
                        <svg width="4" height="8" viewBox="0 0 4 8" fill="#666"><path d="M0 0v8l4-4z" /></svg>
                    </button>
                </div>
            </div>
        </div>
    );
}

function StatusBar() {
    return (
        <div className="flex h-[21px] shrink-0 items-center justify-end bg-[#f3f2f1] pr-2 text-[11px] text-[#555]">
            <button aria-label="Normal view" className="flex h-full w-10 items-center justify-center bg-[#c8c6c4]">
                <svg width="14" height="13" viewBox="0 0 14 13" fill="none" stroke="#333"><path d="M.5.500h13v12H.5zM.5 4.500h13M.5 8.500h13M5 .5v12M9 .5v12" /></svg>
            </button>
            <button aria-label="Page layout view" className="flex h-full w-10 items-center justify-center">
                <svg width="14" height="13" viewBox="0 0 14 13" fill="none" stroke="#444"><path d="M.5.500h13v12H.5zM3.500 2.500h7v8h-7zM5 4.500h4M5 6.500h4M5 8.500h4" /></svg>
            </button>
            <button aria-label="Page break preview" className="flex h-full w-10 items-center justify-center">
                <svg width="14" height="13" viewBox="0 0 14 13" fill="none" stroke="#444"><path d="M.5.500h13v12H.5zM4.500.5v7h5v-7M.5 7.500h4" /></svg>
            </button>
            <button aria-label="Zoom out" className="ml-[5px] mr-[6px] h-px w-2 bg-[#444]" />
            <input
                type="range"
                aria-label="Zoom"
                className="h-[11px] w-[100px] appearance-none bg-transparent [&::-webkit-slider-runnable-track]:h-px [&::-webkit-slider-runnable-track]:bg-[#a6a6a6] [&::-webkit-slider-thumb]:-mt-[5px] [&::-webkit-slider-thumb]:h-[11px] [&::-webkit-slider-thumb]:w-[5px] [&::-webkit-slider-thumb]:appearance-none [&::-webkit-slider-thumb]:bg-[#767676]"
            />
            <button aria-label="Zoom in" className="ml-[5px]">
                <svg width="8" height="9" viewBox="0 0 8 9" stroke="#444"><path d="M0 4.500h8M4 .5v8" /></svg>
            </button>
            <span className="w-10 text-right">100%</span>
        </div>
    );
}

/* ---------- taskbar ---------- */

function LegacyEdgeIcon() {
    return (
        <svg width="22" height="22" viewBox="0 0 22 22" fill="#0a79db">
            <path d="M1 9.500C2 3.800 6 .5 11 .5c6 0 9.800 4.300 9.800 9.700v2.300H8c.2 3.500 3 5 6 5 2.300 0 4.300-.6 6-1.600v4.400c-2 1.100-4.500 1.700-7.300 1.700C7 22 3.200 18.500 3.200 13.500c0-3.500 1.900-6.300 5-7.700C4.900 6 2.500 7.500 1 9.500zM8.200 9h6.600c0-2.600-1.300-3.900-3.300-3.900C9.700 5.100 8.500 6.700 8.200 9z" />
        </svg>
    );
}

function ExplorerIcon() {
    return (
        <svg width="22" height="19" viewBox="0 0 22 19">
            <path d="M0 .5h8l1.500 2H22V17H0z" fill="#fbcf56" />
            <path d="M0 4h22v13.500H0z" fill="#ffe79a" />
            <path d="M4 10h14v8.500h-3.500V14h-7v4.500H4z" fill="#3aa7dd" />
        </svg>
    );
}

function StoreIcon() {
    return (
        <svg width="24" height="24" viewBox="0 0 24 24">
            <path d="M8 7V4.500C8 .3 15 .3 15 4.500V7M11 5c0-4 6-4 6 0v2" fill="none" stroke="#fff" strokeWidth="1.300" />
            <path d="M0 6.500h24V22l-1 1.500H1L0 22z" fill="#fff" />
            <path d="M6.500 9.500h5v5h-5z" fill="#f25022" />
            <path d="M12.500 9.500h5v5h-5z" fill="#7fba00" />
            <path d="M6.500 15.500h5v5h-5z" fill="#00a4ef" />
            <path d="M12.500 15.500h5v5h-5z" fill="#ffb900" />
        </svg>
    );
}

function MailIcon() {
    return (
        <svg width="24" height="20" viewBox="0 0 24 20">
            <path d="M0 6L12 0l12 6v13.500H0z" fill="#fff" />
            <path d="M1 6.500h22l-8 4.500 3.500 5z" fill="#03060d" />
        </svg>
    );
}

function ChromeIcon() {
    return (
        <svg width="24" height="24" viewBox="0 0 24 24">
            <circle cx="12" cy="12" r="11.500" fill="#fbc934" />
            <path d="M2 6.300A11.500 11.500 0 0 1 22 6.300H12L7 14.900z" fill="#dd4b3e" />
            <path d="M2 6.300A11.500 11.500 0 0 0 12 23.500l5-8.600H7z" fill="#1c9f5a" />
            <circle cx="12" cy="12" r="5.400" fill="#f1f1f1" />
            <circle cx="12" cy="12" r="4.200" fill="#4688f4" />
        </svg>
    );
}

function EdgeIcon() {
    return (
        <svg width="25" height="25" viewBox="0 0 24 24">
            <defs>
                <linearGradient id="edge-top" x1="0" x2="1"><stop offset="0" stopColor="#2aa6e6" /><stop offset="1" stopColor="#5fe05a" /></linearGradient>
                <linearGradient id="edge-side" x1="0" x2="1" y1="0" y2="1"><stop offset="0" stopColor="#1b8fe0" /><stop offset="1" stopColor="#114a8b" /></linearGradient>
            </defs>
            <path d="M.3 11C1 4.500 6 .3 12.200.3 19 .3 23.800 5 23.800 10.500c0 3.700-2.700 6-6 6-2.300 0-4-.8-4-1.800 0-.8 1-1.200 1-3 0-2.800-3-5.200-6.500-5.200C4.700 6.500 1.600 8.500.3 11z" fill="url(#edge-top)" />
            <path d="M.2 12C.8 8.500 4.500 6.500 8.300 6.500c2.500 0 4.300 1.300 4.700 2.500-3 0-5 2.300-5 5.500 0 4.500 4 7.500 8.200 7.500 1.900 0 3.600-.5 4.800-1.200C19 22.800 15.800 24 12 24 5 24-.3 18.500.2 12z" fill="url(#edge-side)" />
            <path d="M13 9c-3 0-5 2.300-5 5.500 0 4.500 4 7.500 8.200 7.500 2.500 0 5-1.300 6.300-3.800-4.500 2.500-11 .8-11-4.700 0-2 .7-3.500 1.500-4.500z" fill="#134f96" />
        </svg>
    );
}

function OfficeIcon({ letter, shades, badge }: { letter: string; shades: string[]; badge: string }) {
    return (
        <svg width="24" height="22" viewBox="0 0 24 22">
            {shades.map((shade, i) => <rect key={shade} x="6" y={i * 5.5} width="18" height="5.600" fill={shade} />)}
            <rect x="0" y="5" width="12" height="12" rx="1" fill={badge} />
            <text x="6" y="14.500" fontSize="10" fontWeight="700" textAnchor="middle" fill="#fff">{letter}</text>
        </svg>
    );
}

function FilmIcon() {
    return (
        <svg width="22" height="22" viewBox="0 0 22 22">
            <g transform="rotate(-24 11 11)">
                <path d="M3 2h16v18H3z" fill="#2b2530" />
                <path d="M4 2.500v17M18 2.500v17" stroke="#cfcad6" strokeWidth="1.500" strokeDasharray="2 1.500" />
                <path d="M6.500 3h9v7h-9z" fill="#b58bd0" />
                <path d="M6.500 11h9v8h-9z" fill="#5f4f9e" />
            </g>
        </svg>
    );
}

function TaskbarApp({ label, width, state, children }: { label: string; width?: string; state?: "open" | "active"; children: ReactNode }) {
    return (
        <button aria-label={label} className={clsx("relative flex h-full shrink-0 items-center justify-center", width ?? "w-[49px]")}>
            {state === "active" && <span className="absolute inset-y-0 left-[1px] right-0 bg-[#33383e]" />}
            <span className="relative">{children}</span>
            {state && <span className={clsx("absolute bottom-0 h-[2px] bg-[#76b9ed]", state === "active" ? "left-[1px] right-0" : "left-[5px] right-1")} />}
        </button>
    );
}

function Taskbar() {
    return (
        <footer className="flex h-10 shrink-0 items-center bg-[#03060d] text-white">
            <button aria-label="Start" className="flex h-full w-12 shrink-0 items-center justify-center">
                <svg width="16" height="16" viewBox="0 0 16 16" fill="#fff"><path d="M0 2.200L6.500 1.300v6.200H0zM7.500 1.200L16 0v7.500H7.500zM0 8.500h6.500v6.200L0 13.800zM7.500 8.500H16V16l-8.500-1.200z" /></svg>
            </button>
            <label className="flex h-full w-[344px] shrink-0 items-center bg-[#333] pl-[9px] pr-[15px]">
                <span className="h-[22px] w-[22px] shrink-0 rounded-full border-[3px] border-[#e8e8e8]" />
                <input aria-label="Windows search" placeholder="Type here to search" className="ml-[9px] min-w-0 flex-1 bg-transparent text-[14px] outline-none placeholder:text-[#a9a9a9]" />
                <svg width="12" height="17" viewBox="0 0 12 17" fill="none" stroke="#b5b5b5"><path d="M3.500.5h5v11h-5zM.8 9v4.500h10.400V9M6 13.500V16M3.500 16.200h5" /></svg>
            </label>
            <TaskbarApp label="Task view" width="w-[50px]">
                <svg width="20" height="14" viewBox="0 0 20 14" fill="none" stroke="#fff" strokeWidth="1.200"><path d="M4.500.6h11v12.800h-11zM3 2.500H.6v9H3M17 2.500h2.400v9H17" /></svg>
            </TaskbarApp>
            <TaskbarApp label="Edge legacy"><LegacyEdgeIcon /></TaskbarApp>
            <TaskbarApp label="File Explorer" state="open"><ExplorerIcon /></TaskbarApp>
            <TaskbarApp label="Microsoft Store"><StoreIcon /></TaskbarApp>
            <TaskbarApp label="Mail"><MailIcon /></TaskbarApp>
            <TaskbarApp label="Chrome" state="open"><ChromeIcon /></TaskbarApp>
            <TaskbarApp label="Microsoft Edge"><EdgeIcon /></TaskbarApp>
            <TaskbarApp label="Word" state="open"><OfficeIcon letter="W" shades={["#41a5ee", "#2b7cd3", "#185abd", "#103f91"]} badge="#185abd" /></TaskbarApp>
            <TaskbarApp label="Excel" state="active"><OfficeIcon letter="X" shades={["#33c481", "#21a366", "#107c41", "#185c37"]} badge="#107c41" /></TaskbarApp>
            <TaskbarApp label="Video Editor" state="open"><FilmIcon /></TaskbarApp>

            <div className="flex h-full flex-1 items-center justify-end">
                <button aria-label="Show hidden icons" className="w-[22px]">
                    <svg width="12" height="7" viewBox="0 0 12 7" fill="none" stroke="#fff" strokeWidth="1.300"><path d="M.5 6.500L6 1l5.500 5.500" /></svg>
                </button>
                <svg width="16" height="11" viewBox="0 0 16 11" fill="#e8e8e8" className="mr-2"><path d="M4 10.500a3.600 3.600 0 0 1-.5-7C4.500.8 9.500-.5 11.500 3.500c3 0 4.500 2 4.300 4-.3 2-1.500 3-3.300 3z" /><path d="M.5 8.500C2 5 6 5 8 6.500l6 3.500-2 .5H4C2.500 10.500 1 10 .5 8.500z" fill="#bdbdbd" /></svg>
                <svg width="16" height="13" viewBox="0 0 16 13" fill="none" stroke="#fff" className="mr-[11px]"><path d="M5.500 4.500h9v7h-9z" /><path d="M7 6h6v4H7z" fill="#fff" stroke="none" /><path d="M14.500 6.500h1v3M.5 2.500h4v2c0 2-4 2-4 0zM1.500 0v2M3.500 0v2M2.500 6v4h2" /></svg>
                <svg width="14" height="14" viewBox="0 0 14 14" fill="none" stroke="#ddd" strokeWidth="1.100" className="mr-[7px]"><path d="M.6 13C.6 6 6 .6 13 .6M3.800 13.500C3.800 8 8 3.800 13.500 3.800M7 13.500C7 10 10 7 13.500 7M10 13.500c0-2 1.500-3.500 3.500-3.500" /><circle cx="12.500" cy="12.500" r="1" fill="#fff" /></svg>
                <svg width="17" height="14" viewBox="0 0 17 14" fill="none" stroke="#fff" strokeWidth="1.100" className="mr-[7px]"><path d="M.6 4.500H3L6.500 1v12L3 9.500H.6zM8.500 5c1 1 1 3 0 4M11 3c2 2 2 6 0 8M13.500 1c3.200 3 3.200 9 0 12" /></svg>
                <div className="w-[56px] text-center text-[12px] leading-[18px]">
                    <div>7:46 AM</div>
                    <div>4/9/2021</div>
                </div>
                <button aria-label="Notifications" className="relative ml-4 mr-3 h-6 w-6">
                    <svg width="16" height="17" viewBox="0 0 16 17" fill="#fff"><path d="M0 0h16v13h-4v3.500L8.500 13H0z" /><path d="M3 3h10v1.200H3zM3 6h10v1.200H3zM3 9h7v1.200H3z" fill="#111" /></svg>
                    <span className="absolute -bottom-[3px] right-0 flex h-4 w-4 items-center justify-center rounded-full border border-[#888] bg-[#2b2b2b] text-[11px] leading-none">1</span>
                </button>
                <span className="mr-1 h-full w-px bg-[#55585d]" />
            </div>
        </footer>
    );
}

export default function App() {
    return (
        <div className="relative flex h-screen flex-col overflow-hidden bg-[#e6e6e6] font-['Open_Sans','Noto_Sans',sans-serif]">
            <TitleBar />
            <RibbonTabs />
            <Ribbon />
            <FormulaBar />
            <Worksheet />
            <SheetTabs />
            <StatusBar />
            <Taskbar />
            <div className="pointer-events-none absolute bottom-[73px] right-[58px] w-[235px] whitespace-nowrap text-[#969696]/70">
                <p className="text-[19px] leading-[26px]">Activate Windows</p>
                <p className="text-[14px] leading-5">Go to Settings to activate Windows.</p>
            </div>
        </div>
    );
}
